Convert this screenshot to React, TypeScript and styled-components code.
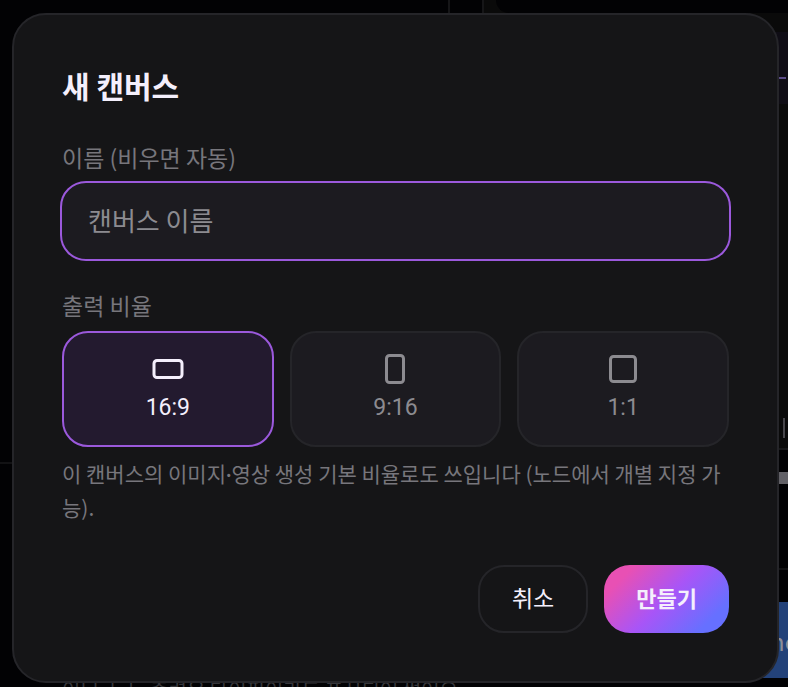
import React, { useState } from "react";
import styled, { createGlobalStyle } from "styled-components";

const GlobalStyle = createGlobalStyle`
  * { box-sizing: border-box; }
  html, body, #root { height: 100%; }
  body {
    margin: 0;
    overflow: hidden;
    background: #020204;
    color: #f4effc;
    font-family: "Noto Sans CJK KR", "Noto Sans", sans-serif;
  }
  button, input { font-family: inherit; }
`;

const Screen = styled.div`
  position: relative;
  min-height: 100vh;
  overflow: hidden;
`;

const Workspace = styled.div`
  position: absolute;
  inset: 0;
  display: grid;
  grid-template-columns: minmax(0, 1fr) 340px;
  color: #47464b;
`;

const Board = styled.div`
  display: flex;
  flex-direction: column;
  justify-content: space-between;
`;

const BoardTop = styled.div`
  height: 464px;
  border-bottom: 2px solid #121214;
`;

const BoardNote = styled.div`
  height: 9px;
  padding-left: 62px;
  white-space: nowrap;
  color: #36363a;
  font-size: 20px;
  line-height: 24px;
`;

const Side = styled.div`
  display: grid;
  grid-template-columns: 34px minmax(0, 1fr);
  height: 600px;
  border-left: 2px solid #161618;
`;

const SideGutter = styled.div`
  border-right: 2px solid #161618;
`;

const Panel = styled.div`
  display: flex;
  flex-direction: column;
  align-items: flex-end;
`;

const PanelBody = styled.div`
  display: flex;
  flex-direction: column;
  align-items: flex-end;
  width: 100%;
  height: 450px;
  padding-left: 12px;
  border-bottom: 2px solid #171719;
  background: #0a0a0a;
`;

const PanelHead = styled.div`
  width: 100%;
  height: 13px;
  margin-bottom: 19px;
  border-bottom-left-radius: 20px;
  background: #020204;
`;

const PanelTag = styled.div`
  display: flex;
  align-items: center;
  justify-content: flex-end;
  width: 60px;
  height: 72px;
  margin-bottom: 314px;
  background: #0f0d15;
`;

const TagMark = styled.div`
  width: 12px;
  height: 2px;
  margin: 20px 2px 0 0;
  background: #5a4b87;
`;

const PanelCaret = styled.div`
  width: 2px;
  height: 20px;
  margin-right: 3px;
  background: #47464b;
`;

const PanelBar = styled.div`
  width: 60px;
  height: 12px;
  margin-top: 22px;
  background: #626167;
`;

const PanelRule = styled.div`
  width: 60px;
  height: 2px;
  margin-top: 84px;
  background: #121214;
`;

const PanelAction = styled.div`
  display: flex;
  flex-shrink: 0;
  align-items: center;
  width: 100px;
  height: 76px;
  margin-top: 32px;
  padding-left: 82px;
  background: #234279;
  color: #8c8f98;
  font-size: 24px;
`;

const Overlay = styled.div`
  position: relative;
  padding: 13px 9px 0 12px;
`;

const Dialog = styled.form`
  display: flex;
  flex-direction: column;
  padding: 45px 48px 48px;
  border: 2px solid #252529;
  border-radius: 34px;
  background: #151517;
`;

const Title = styled.h1`
  margin: 0 0 29px;
  font-size: 30px;
  line-height: 50px;
  font-weight: 700;
`;

const labelText = `
  padding: 0;
  color: #77767c;
  font-size: 23px;
  line-height: 36px;
`;

const Label = styled.label`${labelText}`;

const NameInput = styled.input`
  width: calc(100% + 4px);
  height: 80px;
  margin: 6px -2px 26px;
  padding: 0 26px 4px;
  border: 2px solid #9b59dc;
  border-radius: 26px;
  outline: none;
  background: #1c1b20;
  color: #f4effc;
  font-size: 26px;
  caret-color: transparent;
  &::placeholder { color: #8c8b90; opacity: 1; }
`;

const RatioGroup = styled.fieldset`
  min-width: 0;
  margin: 0;
  padding: 0;
  border: 0;
`;

const Legend = styled.legend`${labelText}`;

const RatioRow = styled.div`
  display: grid;
  grid-template-columns: repeat(3, minmax(0, 1fr));
  gap: 16px;
  margin-top: 8px;
`;

const RatioCard = styled.label<{ $active: boolean }>`
  position: relative;
  display: flex;
  flex-direction: column;
  align-items: center;
  height: 116px;
  padding-top: 20px;
  border: 2px solid ${(p) => (p.$active ? "#9b59dc" : "#252529")};
  border-radius: 26px;
  background: ${(p) => (p.$active ? "#231a2f" : "#1c1b20")};
  color: ${(p) => (p.$active ? "#f4effc" : "#8c8b90")};
  font-family: Roboto, "Noto Sans CJK KR", sans-serif;
  font-size: 23px;
  line-height: 32px;
  cursor: pointer;
`;

const RatioInput = styled.input`
  position: absolute;
  inset: 0;
  margin: 0;
  opacity: 0;
  cursor: pointer;
`;

const RatioIcon = styled.svg`
  width: 32px;
  height: 32px;
  margin-bottom: 7px;
  fill: none;
  stroke: currentColor;
  stroke-width: 3px;
`;

const Hint = styled.p`
  margin: 9px 0 41px;
  color: #77767c;
  font-size: 21px;
  line-height: 34px;
`;

const Dot = styled.span`
  font-family: Lato, sans-serif;
  line-height: 1;
`;

const Actions = styled.div`
  display: flex;
  justify-content: flex-end;
  gap: 16px;
`;

const Button = styled.button<{ $primary?: boolean }>`
  height: 68px;
  padding: 0 32px 4px;
  border: ${(p) => (p.$primary ? "0" : "2px solid #252529")};
  border-radius: 26px;
  background: ${(p) =>
    p.$primary
      ? "linear-gradient(135deg, #e850b4 16%, #a855f7 50%, #6670ff 84%)"
      : "transparent"};
  color: #f4effc;
  font-size: ${(p) => (p.$primary ? "22px" : "23px")};
  font-weight: ${(p) => (p.$primary ? 700 : 400)};
  cursor: pointer;
`;

const ratios = [
  { value: "16:9", width: 28, height: 17 },
  { value: "9:16", width: 17, height: 27 },
  { value: "1:1", width: 25, height: 25 },
];

export default function App() {
  const [name, setName] = useState("");
  const [ratio, setRatio] = useState("16:9");

  return (
    <Screen>
      <GlobalStyle />
      <Workspace aria-hidden="true">
        <Board>
          <BoardTop />
          <BoardNote>이니 ㅣㅣ, 출력은 타이핑이라도 표시되어 썼어요</BoardNote>
        </Board>
        <Side>
          <SideGutter />
          <Panel>
            <PanelBody>
              <PanelHead />
              <PanelTag><TagMark /></PanelTag>
              <PanelCaret />
            </PanelBody>
            <PanelBar />
            <PanelRule />
            <PanelAction>ne</PanelAction>
          </Panel>
        </Side>
      </Workspace>
      <Overlay>
        <Dialog
          role="dialog"
          aria-modal="true"
          aria-labelledby="dialog-title"
          onSubmit={(e) => e.preventDefault()}
        >
          <Title id="dialog-title">새 캔버스</Title>
          <Label htmlFor="canvas-name">이름 (비우면 자동)</Label>
          <NameInput
            id="canvas-name"
            type="text"
            placeholder="캔버스 이름"
            value={name}
            onChange={(e) => setName(e.target.value)}
          />
          <RatioGroup>
            <Legend>출력 비율</Legend>
            <RatioRow>
              {ratios.map((r) => (
                <RatioCard key={r.value} $active={ratio === r.value}>
                  <RatioInput
                    type="radio"
                    name="ratio"
                    value={r.value}
                    checked={ratio === r.value}
                    onChange={() => setRatio(r.value)}
                  />
                  <RatioIcon viewBox="0 0 32 32" aria-hidden="true">
                    <rect
                      x={(32 - r.width) / 2}
                      y={(32 - r.height) / 2}
                      width={r.width}
                      height={r.height}
                      rx="3"
                    />
                  </RatioIcon>
                  {r.value}
                </RatioCard>
              ))}
            </RatioRow>
          </RatioGroup>
          <Hint>
            이 캔버스의 이미지<Dot>·</Dot>영상 생성 기본 비율로도 쓰입니다 (노드에서 개별 지정 가능).
          </Hint>
          <Actions>
            <Button type="button">취소</Button>
            <Button type="submit" $primary>만들기</Button>
          </Actions>
        </Dialog>
      </Overlay>
    </Screen>
  );
}
